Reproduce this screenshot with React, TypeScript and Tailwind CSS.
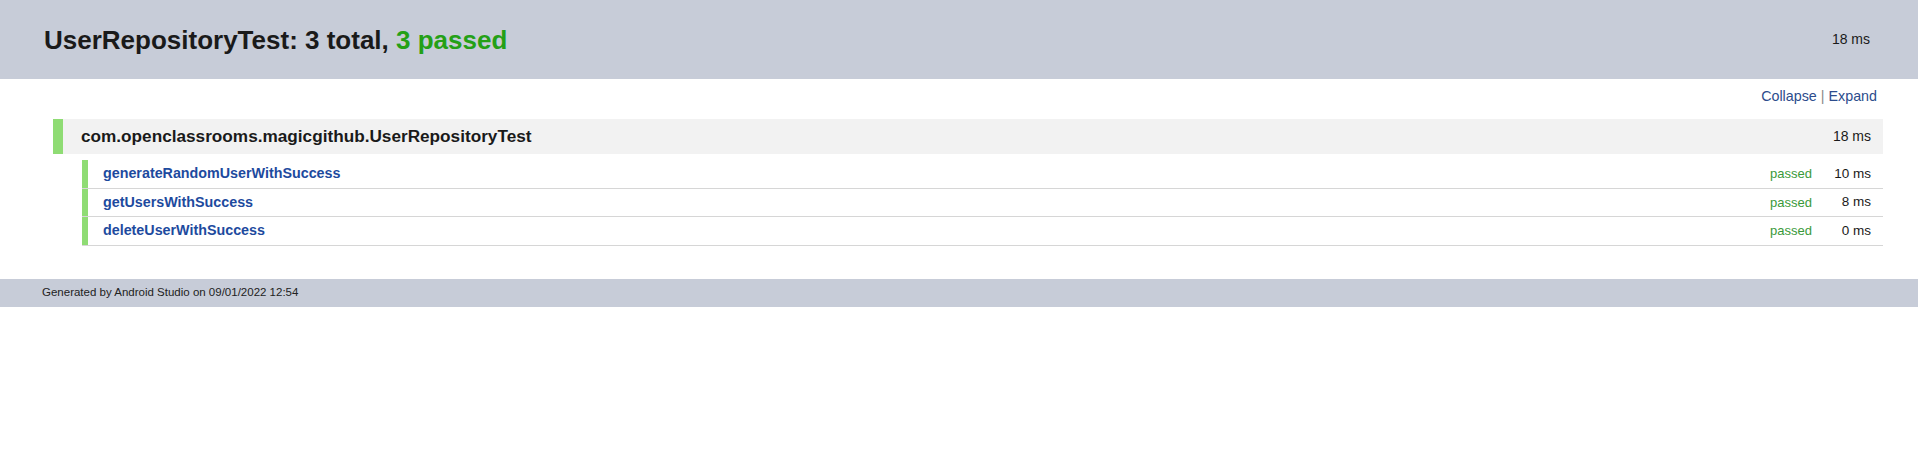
import React from "react";

const tests = [
  { name: "generateRandomUserWithSuccess", time: "10 ms" },
  { name: "getUsersWithSuccess", time: "8 ms" },
  { name: "deleteUserWithSuccess", time: "0 ms" },
];

export default function App() {
  return (
    <div className="w-[1918px] min-h-[459px] bg-white font-['Liberation_Sans',Arial,sans-serif] text-[#1a1a1a]">
      <header className="h-[79px] bg-[#c7ccd8] flex items-center justify-between pl-[44px] pr-[48px]">
        <h1 className="text-[26px] font-bold leading-none">
          UserRepositoryTest: 3 total, <span className="text-[#24a016]">3 passed</span>
        </h1>
        <span className="text-[14px]">18 ms</span>
      </header>

      <div className="pl-[53px] pr-[35px]">
        <div className="flex justify-end pr-[6px] pt-[9px] text-[14.3px] leading-[17px] text-[#2c4c8c]">
          <span>Collapse</span>
          <span className="mx-[4px] text-[#888]">|</span>
          <span>Expand</span>
        </div>

        <div className="mt-[14px] flex h-[35px] bg-[#f2f2f2]">
          <div className="w-[10px] bg-[#8fdc74]" />
          <div className="flex flex-1 items-center justify-between pl-[18px] pr-[12px]">
            <span className="text-[17.2px] font-bold">com.openclassrooms.magicgithub.UserRepositoryTest</span>
            <span className="text-[14px]">18 ms</span>
          </div>
        </div>

        <div className="mt-[6px] ml-[29px] flex flex-col">
          {tests.map((t) => (
            <div key={t.name} className="flex h-[27.5px] border-b border-[#d6d6d6] box-content">
              <div className="w-[6px] bg-[#8fdc74]" />
              <div className="flex flex-1 items-center pl-[15px] pr-[12px]">
                <span className="flex-1 text-[14.3px] font-bold text-[#1d4a9e]">{t.name}</span>
                <span className="text-[13px] text-[#3a9a3a]">passed</span>
                <span className="w-[59px] text-right text-[13.5px]">{t.time}</span>
              </div>
            </div>
          ))}
        </div>
      </div>

      <footer className="mt-[33px] h-[28px] bg-[#c7ccd8] flex items-center pl-[42px] text-[11.5px] text-[#222]">
        Generated by Android Studio on 09/01/2022 12:54
      </footer>
    </div>
  );
}
